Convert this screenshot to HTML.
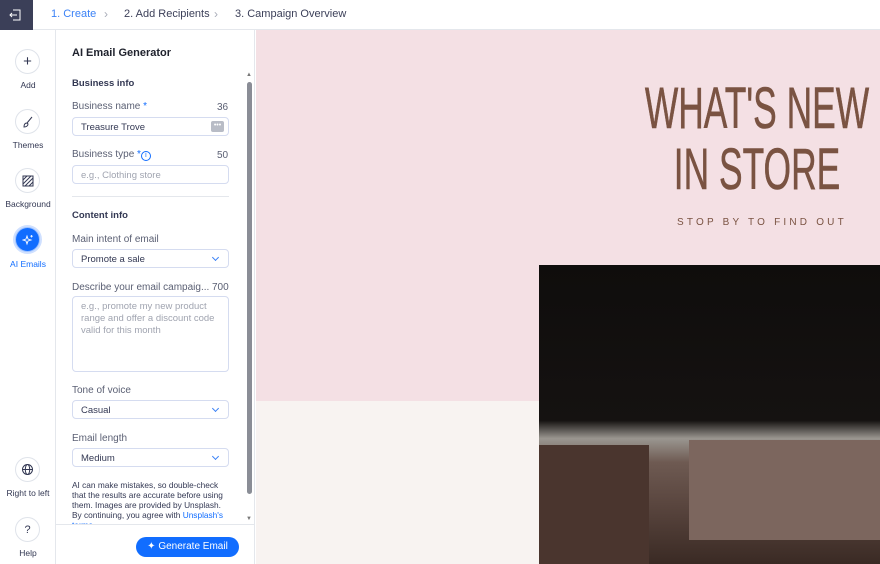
<!DOCTYPE html>
<html><head><meta charset="utf-8"><style>
*{box-sizing:border-box;margin:0;padding:0}
html,body{width:880px;height:564px;overflow:hidden}
body{font-family:"Liberation Sans",sans-serif;background:#fff;position:relative;color:#333853}
#w{position:absolute;left:0;top:0;width:880px;height:564px;overflow:hidden}
.abs{position:absolute}
.top{left:0;top:0;width:880px;height:30px;border-bottom:1px solid #e4e7ec;background:#fff}
.exit{left:0;top:0;width:33px;height:30px;background:#3b3f58}
.step{top:8px;font-size:11px;color:#3b3f58}
.chev{top:7px;font-size:12px;color:#a8acb8}
.rail{left:0;top:30px;width:56px;height:534px;border-right:1px solid #e4e7ec;background:#fff}
.ic{left:15px;width:25px;height:25px;border-radius:50%;border:1px solid #dfe3ea;background:#fff;display:flex;align-items:center;justify-content:center}
.lbl{width:56px;left:0;text-align:center;font-size:8.5px;color:#333853}
.panel{left:56px;top:30px;width:199px;height:534px;background:#fff;border-right:1px solid #e4e7ec}
.t{font-size:10px;color:#5a5f73}
.h{font-size:9.5px;font-weight:bold;color:#333853}
.inp{left:72px;width:157px;height:19px;border:1px solid #d5dcf0;border-radius:4px;font-size:9.5px;padding:4px 8px;color:#333853;background:#fff}
.dd::after{content:"";position:absolute;right:10px;top:5px;width:4px;height:4px;border-right:1px solid #3b82f6;border-bottom:1px solid #3b82f6;transform:rotate(45deg)}
.big{left:557px;width:400px;text-align:center;font-size:58px;line-height:58px;color:#7a5342;white-space:nowrap;transform:scaleX(0.61);transform-origin:200px 0;-webkit-text-stroke:0.6px #7a5342}
</style></head><body><div id="w">
<div class="abs top"></div>
<div class="abs exit"><svg width="33" height="30"><path d="M13 10h7v10h-7" fill="none" stroke="#fff" stroke-width="1"/><path d="M10 15h7M12 13l-2 2 2 2" fill="none" stroke="#fff" stroke-width="1"/></svg></div>
<div class="abs step" style="left:51px;color:#3b82f6">1. Create</div>
<div class="abs chev" style="left:104px">›</div>
<div class="abs step" style="left:124px">2. Add Recipients</div>
<div class="abs chev" style="left:214px">›</div>
<div class="abs step" style="left:235px">3. Campaign Overview</div>

<div class="abs rail"></div>
<div class="abs ic" style="top:49px"><span style="font-size:15px;line-height:1">+</span></div>
<div class="abs lbl" style="top:80px">Add</div>
<div class="abs ic" style="top:109px"><svg width="12" height="12"><path d="M10 1L5 7M5 7c-2 0-3 1-3 4 2 0 4-1 4-3z" fill="none" stroke="#333853" stroke-width="1"/></svg></div>
<div class="abs lbl" style="top:140px">Themes</div>
<div class="abs ic" style="top:168px"><svg width="12" height="12"><rect x="1" y="1" width="10" height="10" fill="none" stroke="#333853"/><path d="M1 5l4-4M1 9l8-8M3 11l8-8M7 11l4-4" stroke="#333853"/></svg></div>
<div class="abs lbl" style="top:199px">Background</div>
<div class="abs ic" style="top:227px;background:#116dff;border-color:#9ec2ff;box-shadow:0 0 0 2px #cfe0ff"><svg width="12" height="12"><path d="M5 2l1 3 3 1-3 1-1 3-1-3-3-1 3-1z" fill="none" stroke="#fff" stroke-width="0.9"/><path d="M9.5 1v2.5M8.3 2.2h2.5" stroke="#fff" stroke-width="0.8"/></svg></div>
<div class="abs lbl" style="top:259px;color:#116dff">AI Emails</div>
<div class="abs ic" style="top:457px"><svg width="13" height="13"><circle cx="6.5" cy="6.5" r="5" fill="none" stroke="#333853"/><ellipse cx="6.5" cy="6.5" rx="2.2" ry="5" fill="none" stroke="#333853"/><path d="M1.5 6.5h10" stroke="#333853"/></svg></div>
<div class="abs lbl" style="top:488px">Right to left</div>
<div class="abs ic" style="top:517px"><span style="font-size:11px">?</span></div>
<div class="abs lbl" style="top:548px">Help</div>

<div class="abs panel"></div>
<div class="abs" style="left:72px;top:47px;font-size:11px;font-weight:bold;color:#20232e">AI Email Generator</div>
<div class="abs h" style="left:72px;top:78px">Business info</div>
<div class="abs t" style="left:72px;top:101px">Business name <span style="color:#116dff">*</span></div>
<div class="abs t" style="left:217px;top:102px">36</div>
<div class="abs inp" style="top:117px">Treasure Trove<span style="position:absolute;right:4px;top:3px;width:13px;height:11px;background:#b8bcc6;border-radius:2px;color:#fff;font-size:7px;line-height:9px;text-align:center">•••</span></div>
<div class="abs t" style="left:72px;top:149px">Business type <span style="color:#116dff">*</span><span style="display:inline-block;width:10px;height:10px;border:1px solid #116dff;border-radius:50%;color:#116dff;font-size:7px;line-height:8px;text-align:center;vertical-align:0px">i</span></div>
<div class="abs t" style="left:217px;top:150px">50</div>
<div class="abs inp" style="top:165px;color:#a0a4b0">e.g., Clothing store</div>
<div class="abs" style="left:72px;top:196px;width:157px;height:1px;background:#e4e7ec"></div>
<div class="abs h" style="left:72px;top:210px">Content info</div>
<div class="abs t" style="left:72px;top:234px">Main intent of email</div>
<div class="abs inp dd" style="top:249px">Promote a sale</div>
<div class="abs t" style="left:72px;top:282px">Describe your email campaig...</div>
<div class="abs t" style="left:212px;top:282px">700</div>
<div class="abs inp" style="top:296px;height:76px;color:#a0a4b0;line-height:12px">e.g., promote my new product range and offer a discount code valid for this month</div>
<div class="abs t" style="left:72px;top:385px">Tone of voice</div>
<div class="abs inp dd" style="top:400px">Casual</div>
<div class="abs t" style="left:72px;top:433px">Email length</div>
<div class="abs inp dd" style="top:448px">Medium</div>
<div class="abs" style="left:72px;top:480px;width:158px;font-size:8.3px;line-height:10px;color:#333853;height:44px;overflow:hidden">AI can make mistakes, so double-check that the results are accurate before using them. Images are provided by Unsplash. By continuing, you agree with <span style="color:#116dff">Unsplash's terms</span></div>
<div class="abs" style="left:56px;top:524px;width:199px;height:1px;background:#e4e7ec"></div>
<div class="abs" style="left:246px;top:72px;font-size:6px;color:#777">▲</div>
<div class="abs" style="left:247px;top:82px;width:5px;height:412px;background:#8a8d96;border-radius:3px"></div>
<div class="abs" style="left:246px;top:516px;font-size:6px;color:#777">▼</div>
<div class="abs" style="left:136px;top:537px;width:103px;height:20px;border-radius:10px;background:#116dff;color:#fff;font-size:10px;line-height:20px;text-align:center">✦ Generate Email</div>

<div class="abs" style="left:256px;top:30px;width:624px;height:371px;background:#f4e0e4"></div>
<div class="abs" style="left:256px;top:401px;width:624px;height:163px;background:#f8f3f1"></div>
<div class="abs big" style="top:80px">WHAT'S NEW</div>
<div class="abs big" style="top:141px">IN STORE</div>
<div class="abs" style="left:677px;top:217px;font-size:10px;letter-spacing:3.2px;color:#7a5342">STOP BY TO FIND OUT</div>
<div class="abs" style="left:539px;top:265px;width:341px;height:299px;overflow:hidden;background:linear-gradient(180deg,#0f0d0c 0%,#151211 52%,#9a9690 58%,#6e5a52 66%,#5a463f 80%,#3a2a24 100%)">
<div class="abs" style="left:0;top:180px;width:110px;height:119px;background:#4a352e"></div>
<div class="abs" style="left:150px;top:175px;width:191px;height:100px;background:#7c665e"></div>
</div>
</div></body></html>
